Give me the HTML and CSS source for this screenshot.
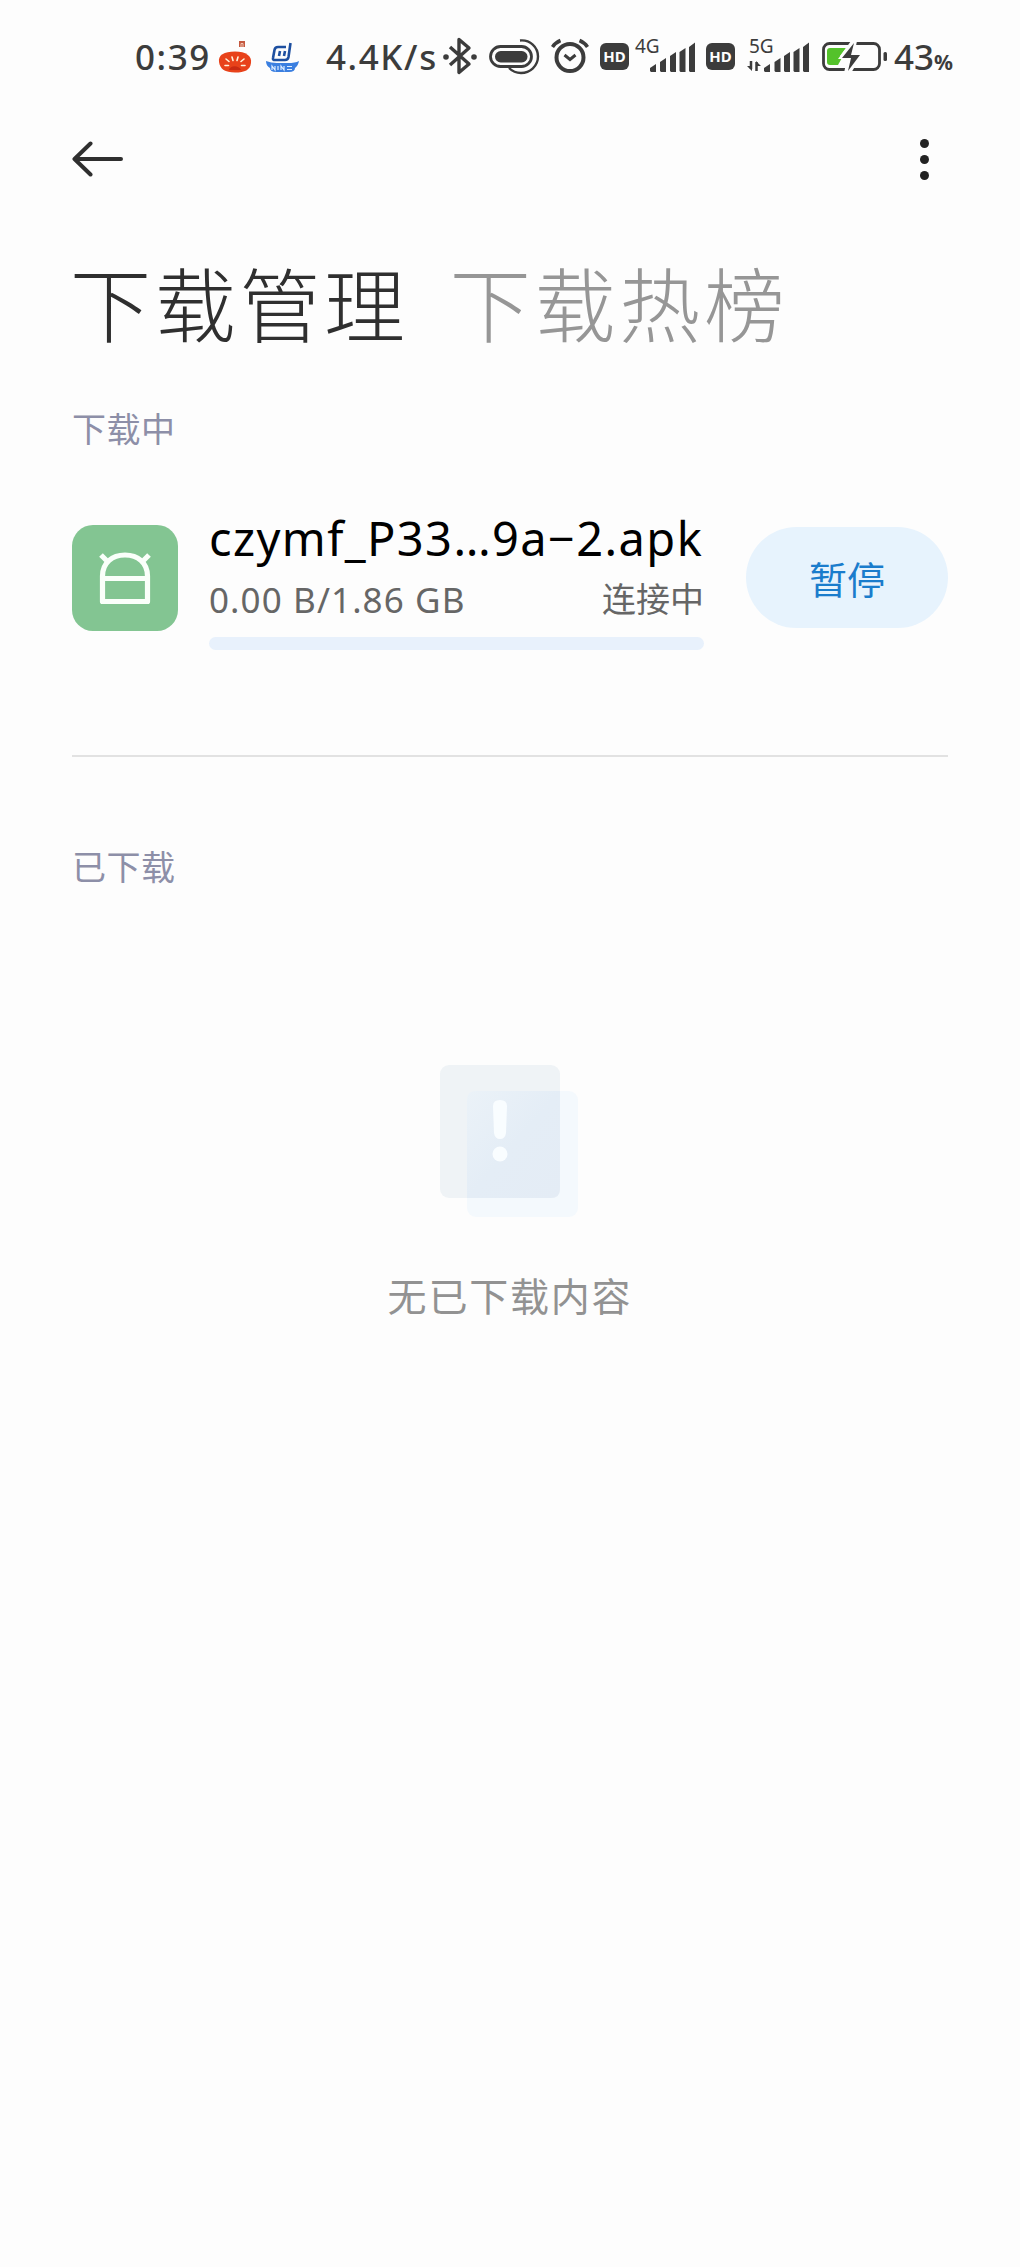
FILE: index.html
```html
<!DOCTYPE html>
<html lang="zh-CN">
<head>
    <meta charset="UTF-8">
    <meta name="viewport" content="width=device-width, initial-scale=1.0">
    <title>下载管理</title>
    <link rel="stylesheet" href="styles.css">
</head>
<body>
    <!-- Barre d'état -->
    <div class="status-bar">
        <span class="time">0:39</span>
        <svg class="tomato" width="34" height="44" viewBox="218 36 34 44">
            <path d="M219 62C218 55 224 51.500 235 51.500C246 51.500 252 56 251 63C250 70 245 72.500 235 72.500C225 72.500 220 69 219 62Z" fill="#e8421a"/>
            <path d="M226 59l3 2.500M232 57l1 3.500M238 57l-1 3.500M244 59l-3 2.500M225 65.500l3.500 0M245 65.500l-3.500 0" stroke="#fff3dc" stroke-width="1.600" stroke-linecap="round"/>
            <path d="M229 70c1-5 10-5 12 0z" fill="#c92b12"/>
            <path d="M239 41h6v6h-6z" fill="#c4583f"/>
            <path d="M241 47v-3.500h2V47" stroke="#f1c6b5" fill="none"/>
        </svg>
        <svg class="bowl" width="34" height="44" viewBox="266 36 34 44">
            <path d="M286 47h-8q-3 0-3.500 3l-1.500 8q-.5 2 2 2h10q3 0 3.500-3l2-14M280 51l-1 5M285 51l-1 5" fill="none" stroke="#1d4fa0" stroke-width="2.600"/>
            <path d="M266 61q5 2 11 2h11q7 0 11-2q-1 5-4 7q0 4-6 4h-13q-6 0-6-4q-4-2-4-7z" fill="#3b7fe0"/>
            <path d="M272 70v-4l3 4v-4M278 66v4M281 70v-4l3 4v-4M287 66.500h5M287 69.500h5" fill="none" stroke="#dcebff" stroke-width="1.200"/>
        </svg>
        <span class="speed">4.4K/s</span>
        <svg class="bluetooth" width="34" height="44" viewBox="443 36 34 44">
            <path d="M450 47l19 17l-10 8.500v-33l10 8.500l-19 17" fill="none" stroke="#3c3c3c" stroke-width="3.400" stroke-linejoin="round"/>
            <circle cx="446" cy="57" r="2.800" fill="#3c3c3c"/>
            <circle cx="474" cy="57" r="2.800" fill="#3c3c3c"/>
        </svg>
        <svg class="clip" width="51" height="44" viewBox="489 36 51 44">
            <path d="M520 40.500C530 39.500 538 47 538 56.500C538 66 530 73 521 73C516 73 512 71 509 68" fill="none" stroke="#3c3c3c" stroke-width="2.400"/>
            <rect x="490.500" y="46.500" width="41" height="20" rx="10" fill="#fdfdfd" stroke="#3c3c3c" stroke-width="2.800"/>
            <rect x="495" y="51" width="32.500" height="11.500" rx="5.700" fill="#3c3c3c"/>
        </svg>
        <svg class="alarm" width="38" height="44" viewBox="551 36 38 44">
            <circle cx="570" cy="57.500" r="13.500" fill="none" stroke="#3c3c3c" stroke-width="4"/>
            <path d="M564.500 55l5.500 4.500l5.500-4.500" fill="none" stroke="#3c3c3c" stroke-width="3"/>
            <path d="M552.500 47q3-4.500 8-6.500M579.500 40.500q5 2 8 6.500" fill="none" stroke="#3c3c3c" stroke-width="3.600"/>
        </svg>
        <span class="hd hd-first">HD</span>
        <div class="signal">
            <span class="net">4G</span>
            <svg width="60" height="44" viewBox="635 36 60 44">
                <path d="M650 71v-3l6-4v8h-5zM660 62l6-4v14h-5l-1-1zM670 56l6-4v20h-5l-1-1zM679.500 52l6-4v24h-5l-1-1zM689 47l6-4.500V72h-5l-1-1z" fill="#3c3c3c"/>
            </svg>
        </div>
        <span class="hd hd-second">HD</span>
        <div class="signal signal-5g">
            <span class="net">5G</span>
            <svg width="62" height="44" viewBox="747 36 62 44">
                <path d="M764 71v-3l6-4v8h-5zM774.500 62l6-4v14h-5l-1-1zM784 56l6-4v20h-5l-1-1zM793.500 52l6-4v24h-5l-1-1zM803 47l6-4.500V72h-5l-1-1z" fill="#3c3c3c"/>
                <path d="M751 61v8M756.500 62v9" stroke="#3c3c3c" stroke-width="2.500"/>
                <path d="M747 66l5 0v5zM756 61l5 5h-5z" fill="#3c3c3c"/>
            </svg>
        </div>
        <svg class="battery" width="66" height="44" viewBox="823 36 66 44">
            <rect x="824.500" y="43.500" width="56" height="26" rx="6" fill="none" stroke="#3c3c3c" stroke-width="2.800"/>
            <path d="M831 48h16l-6 8h3l-5 9h-8q-3 0-3-3v-11q0-3 3-3z" fill="#54c22b"/>
            <path d="M852 41l-13 18h9l-3 14h7l11-18h-8l3-14z" fill="#fdfdfd"/>
            <path d="M855 43l-12 15h9l-3 13l12-16h-9z" fill="#3c3c3c"/>
            <rect x="884.500" y="52" width="3.500" height="9" rx="1.500" fill="#3c3c3c"/>
        </svg>
        <span class="percent">43<small>%</small></span>
    </div>

    <div class="toolbar">
        <svg width="52" height="38" viewBox="72 140 52 38">
            <path d="M90.500 143.500L74.500 159L90.500 174.500M75 159H121" fill="none" stroke="#2f2f2f" stroke-width="4" stroke-linecap="round" stroke-linejoin="round"/>
        </svg>
        <div class="menu">
            <i></i>
            <i></i>
            <i></i>
        </div>
    </div>

    <div class="container">
        <div class="tabs">
            <h1>下载管理</h1>
            <h1 class="inactive">下载热榜</h1>
        </div>

        <h2>下载中</h2>
        <div class="download">
            <div class="app-icon">
                <svg width="105" height="105" viewBox="72 525 105 105">
                    <path d="M102.500 601.500V576C102.500 563 112 555 125 555S147.500 563 147.500 576V601.500ZM102.500 578.500H147.500M101 555l5.500 5.500M149 555l-5.500 5.500" fill="none" stroke="#fafffa" stroke-width="5.200" stroke-linejoin="round"/>
                </svg>
            </div>
            <div class="info">
                <div class="file-name">czymf_P33…9a−2.apk</div>
                <div class="details">
                    <span class="size">0.00 B/1.86 GB</span>
                    <span class="state">连接中</span>
                </div>
                <div class="progress"></div>
            </div>
            <button>暂停</button>
        </div>

        <h2 class="done-title">已下载</h2>
        <div class="empty">
            <svg width="148" height="160" viewBox="436 1063 148 160">
                <defs>
                    <linearGradient id="overlap" x1="0" y1="0" x2="1" y2="1">
                        <stop offset="0" stop-color="#ebf2f8"/>
                        <stop offset=".5" stop-color="#e4edf6"/>
                        <stop offset="1" stop-color="#e4ecf5"/>
                    </linearGradient>
                </defs>
                <rect x="467" y="1091" width="111" height="126" rx="9" fill="#f4f9fd"/>
                <rect x="440" y="1065" width="120" height="133" rx="9" fill="#eff3f6"/>
                <path d="M467 1198V1100q0-9 9-9H560V1189q0 9-9 9z" fill="url(#overlap)"/>
                <path d="M493 1106q0-6 7-6t7 6l-1 27q-1 6-6 6t-6-6z" fill="#f9fdff"/>
                <circle cx="500" cy="1154" r="7.500" fill="#f9fdff"/>
            </svg>
            <p>无已下载内容</p>
        </div>
    </div>
</body>
</html>
```
FILE: styles.css
```css
* {
    box-sizing: border-box;
}
body {
    font-family: "Noto Sans", "Noto Sans CJK SC", sans-serif;
    background-color: #fdfdfd;
    color: #2f2f2f;
    margin: 0;
    min-height: 2267px;
}
svg {
    display: block;
    flex: none;
}
.status-bar {
    display: flex;
    height: 80px;
    padding: 36px 0 0 135px;
    color: #3c3c3c;
    line-height: 42px;
    white-space: nowrap;
}
.time, .speed, .percent {
    font-family: "Noto Sans", sans-serif;
    font-size: 35px;
    font-weight: 500;
    flex: none;
}
.time {
    width: 83px;
    letter-spacing: 1.6px;
}
.bowl {
    margin-left: 14px;
}
.speed {
    width: 117px;
    margin-left: 26px;
    letter-spacing: 1.6px;
}
.clip {
    margin-left: 12px;
}
.alarm {
    margin-left: 11px;
}
.hd {
    flex: none;
    width: 29px;
    height: 27px;
    margin-top: 7px;
    border-radius: 6px;
    background: #3c3c3c;
    color: #fff;
    font: bold 15px/27px "Noto Sans", sans-serif;
    text-align: center;
}
.hd-first, .hd-second {
    margin-left: 11px;
}
.signal {
    position: relative;
    margin-left: 6px;
}
.signal-5g {
    margin-left: 12px;
}
.net {
    position: absolute;
    left: 0;
    top: 0;
    font-size: 19px;
    line-height: 20px;
}
.signal-5g .net {
    left: 2px;
}
.battery {
    margin-left: 13px;
}
.percent {
    margin-left: 6px;
}
.percent small {
    font-size: 21px;
    font-weight: bold;
}
.toolbar {
    display: flex;
    justify-content: space-between;
    align-items: center;
    height: 158px;
    padding: 0 91px 0 72px;
}
.menu {
    display: flex;
    flex-direction: column;
    gap: 7px;
}
.menu i {
    width: 9px;
    height: 9px;
    border-radius: 50%;
    background: #222;
}
.container {
    padding: 0 72px;
}
.tabs {
    display: flex;
    gap: 41px;
    height: 132px;
    margin-left: -2px;
}
h1 {
    margin: 0;
    font: 300 81px/125px "Noto Sans CJK SC", sans-serif;
    letter-spacing: 3.7px;
    white-space: nowrap;
}
.inactive {
    color: #969696;
}
h2 {
    margin: 33px 0 0;
    font: 400 34px/50px "Noto Sans CJK SC", sans-serif;
    letter-spacing: .5px;
    color: #8d8fa8;
}
.download {
    display: flex;
    align-items: flex-start;
    height: 304px;
    padding-top: 60px;
    border-bottom: 2px solid #e2e2e2;
}
.app-icon {
    width: 106px;
    height: 106px;
    margin-top: 12px;
    border-radius: 21px;
    background: #83c592;
}
.info {
    width: 495px;
    margin-left: 31px;
}
.file-name {
    height: 58px;
    font-size: 47px;
    line-height: 51px;
    letter-spacing: 1.4px;
    color: #000;
    white-space: nowrap;
}
.details {
    display: flex;
    justify-content: space-between;
    height: 58px;
    font-size: 35px;
    line-height: 58px;
    color: #666;
}
.size {
    letter-spacing: 1.1px;
}
.state {
    font-size: 34px;
    line-height: 56px;
}
.progress {
    height: 13px;
    margin-top: 8px;
    border-radius: 7px;
    background: #e8f1fc;
}
button {
    width: 202px;
    height: 101px;
    margin: 14px 0 0 42px;
    padding: 0;
    border: none;
    border-radius: 51px;
    background: #e7f3fd;
    color: #1a7ccc;
    font: 400 38px/99px "Noto Sans CJK SC", sans-serif;
}
.done-title {
    margin-top: 84px;
}
.empty {
    display: flex;
    flex-direction: column;
    align-items: center;
    padding-top: 172px;
}
.empty p {
    margin: 41px 0 0;
    font: 400 39px/60px "Noto Sans CJK SC", sans-serif;
    letter-spacing: 1.8px;
    color: #929292;
}
```
